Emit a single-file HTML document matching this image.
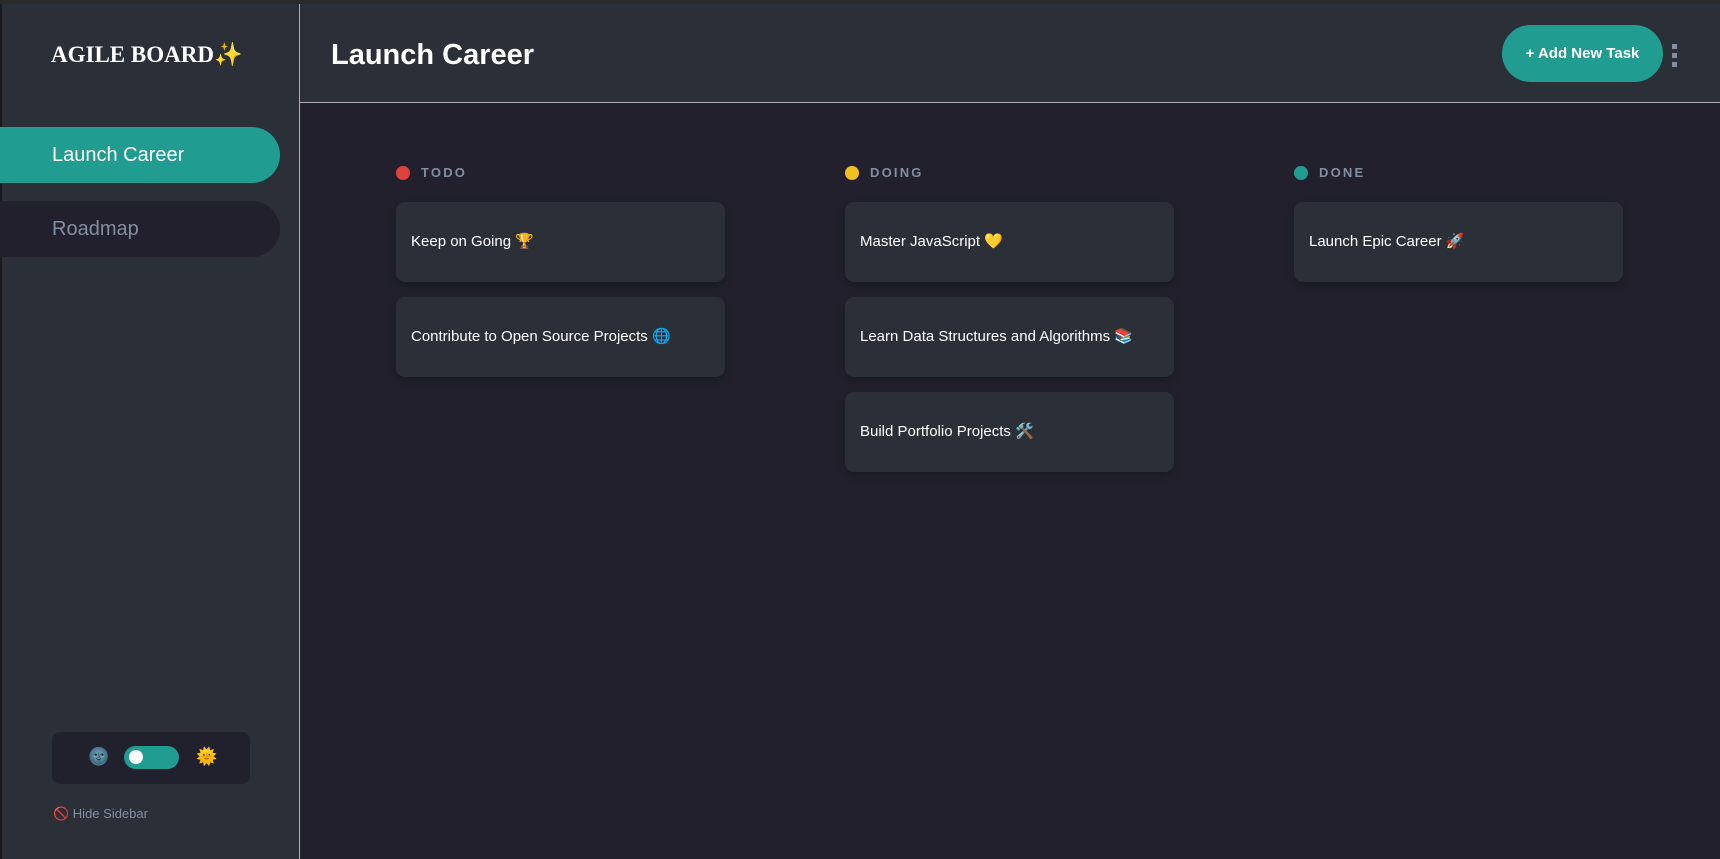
<!DOCTYPE html>
<html><head><meta charset="utf-8"><style>
*{box-sizing:border-box;margin:0;padding:0}
body{width:1720px;height:859px;overflow:hidden;background:#21202c;font-family:"Liberation Sans","Noto Sans CJK SC",sans-serif;position:relative}
.top{position:absolute;left:0;top:0;width:1720px;height:4px;background:#2a2a2e}
.side{position:absolute;left:0;top:4px;width:300px;height:855px;background:#2b2f38;border-right:1px solid #a9aeb7;border-left:2px solid #1a1a1e}
.logo{position:absolute;left:49px;top:37px;font-family:"Liberation Serif",serif;font-weight:bold;font-size:23px;color:#fff}
.nav{position:absolute;left:-2px;width:280px;height:56px;border-radius:0 28px 28px 0;font-size:20px;padding-left:52px;line-height:56px}
.head{position:absolute;left:300px;top:4px;width:1420px;height:99px;background:#2b2f38;border-bottom:1px solid #a9aeb7}
.title{position:absolute;left:31px;top:35px;font-size:29px;font-weight:bold;color:#fff}
.btn{position:absolute;left:1202px;top:21px;width:161px;height:57px;border-radius:29px;background:#209c90;color:#fff;font-weight:bold;font-size:15px;text-align:center;line-height:57px}
.dots{position:absolute;left:1372px;top:40px;width:5px}
.dots i{display:block;width:5px;height:5px;background:#828fa3;margin-bottom:4px}
.col{position:absolute;top:163px;width:329px}
.lab{height:20px;font-size:13px;font-weight:bold;letter-spacing:2.2px;color:#828fa3;padding-left:25px;line-height:20px;position:relative}
.lab:before{content:"";position:absolute;left:0;top:3px;width:14px;height:14px;border-radius:50%;background:var(--c)}
.card{margin-top:19px;height:80px;border-radius:9px;background:#2b2f38;color:#fff;font-size:15px;padding-left:15px;line-height:80px;box-shadow:0 4px 8px rgba(0,0,0,.2)}
.card+.card{margin-top:15px}
.tog{position:absolute;left:50px;width:198px;height:52px;border-radius:8px;background:#21212d}
.sw{position:absolute;left:72px;top:14px;width:55px;height:23px;border-radius:12px;background:#209c90}
.sw:after{content:"";position:absolute;left:5px;top:4px;width:14px;height:14px;border-radius:50%;background:#fff}
</style></head><body>
<div class="top"></div>
<div class="side">
<div class="logo">AGILE BOARD✨</div>
<div class="nav" style="top:123px;background:#209c90;color:#fff">Launch Career</div>
<div class="nav" style="top:197px;background:#21202c;color:#828fa3">Roadmap</div>
<div class="tog" style="top:728px"><span style="position:absolute;left:36px;top:15px;font-size:17px">🌚</span><div class="sw"></div><span style="position:absolute;left:144px;top:15px;font-size:17px">🌞</span></div>
<div style="position:absolute;left:51px;top:802px;font-size:13px;color:#828fa3">🚫 Hide Sidebar</div>
</div>
<div class="head"><div class="title">Launch Career</div><div class="btn">+ Add New Task</div><div class="dots"><i></i><i></i><i></i></div></div>
<div class="col" style="left:396px"><div class="lab" style="--c:#e0413a">TODO</div><div class="card">Keep on Going 🏆</div><div class="card">Contribute to Open Source Projects 🌐</div></div>
<div class="col" style="left:845px"><div class="lab" style="--c:#f0bf22">DOING</div><div class="card">Master JavaScript 💛</div><div class="card">Learn Data Structures and Algorithms 📚</div><div class="card">Build Portfolio Projects 🛠️</div></div>
<div class="col" style="left:1294px"><div class="lab" style="--c:#209c90">DONE</div><div class="card">Launch Epic Career 🚀</div></div>
</body></html>
